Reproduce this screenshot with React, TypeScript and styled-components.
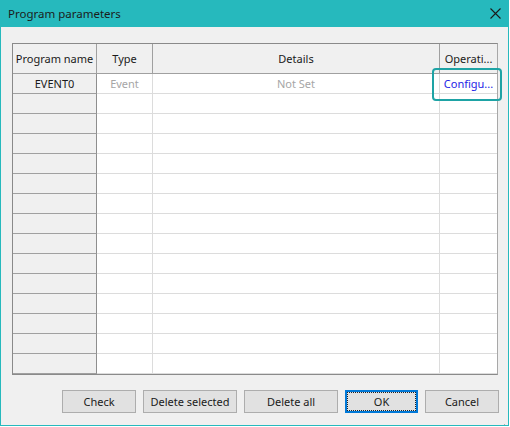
import React from "react";
import styled, { createGlobalStyle } from "styled-components";

const Global = createGlobalStyle`
  html, body { margin: 0; padding: 0; background: #ffffff; }
  body { font-family: "Noto Sans", "Liberation Sans", sans-serif; }
`;

const Window = styled.div`
  width: 509px;
  height: 426px;
  box-sizing: border-box;
  border: 1px solid #26b9bd;
  border-top: none;
  background: #f0f0f0;
  display: flex;
  flex-direction: column;
  position: relative;
`;

const TitleBar = styled.div`
  height: 27px;
  background: #26b9bd;
  display: flex;
  align-items: center;
  justify-content: space-between;
  padding: 0 8px 0 8px;
  margin: 0 -1px;
  color: #1b1b1b;
  font-size: 11.5px;
  font-family: "Noto Sans", "Liberation Sans", sans-serif;
`;

const CloseBtn = styled.div`
  width: 12px;
  height: 12px;
  display: flex;
  align-items: center;
  justify-content: center;
`;

const Body = styled.div`
  flex: 1;
  display: flex;
  flex-direction: column;
  padding: 16px 0 0 11px;
`;

const Frame = styled.div`
  position: relative;
  width: 486px;
  box-sizing: border-box;
  border: 1px solid #8a8a8a;
  border-right-color: #a8a8a8;
  background: #ffffff;
`;

const Grid = styled.div`
  display: grid;
  grid-template-columns: 84px 56px 287px 57px;
  grid-auto-rows: 20px;
  grid-template-rows: 30px;
  font-family: "Noto Sans", "Liberation Sans", sans-serif;
  font-size: 11px;
`;

const HeadCell = styled.div<{ $last?: boolean }>`
  background: #f0f0f0;
  border-right: ${(p) => (p.$last ? "none" : "1px solid #a0a0a0")};
  border-bottom: 1px solid #a0a0a0;
  display: flex;
  align-items: center;
  justify-content: center;
  color: #1a1a1a;
  white-space: nowrap;
  overflow: hidden;
  padding-bottom: 1px;
  box-sizing: border-box;
`;

const RowHead = styled.div`
  background: #f0f0f0;
  border-right: 1px solid #8e8e8e;
  border-bottom: 1px solid #a0a0a0;
  box-sizing: border-box;
  display: flex;
  align-items: center;
  justify-content: center;
  color: #1a1a1a;
`;

const Cell = styled.div<{ $tone?: "muted" | "link"; $last?: boolean }>`
  background: #ffffff;
  border-right: ${(p) => (p.$last ? "none" : "1px solid #dcdcdc")};
  border-bottom: 1px solid #dcdcdc;
  box-sizing: border-box;
  display: flex;
  align-items: center;
  justify-content: center;
  white-space: nowrap;
  color: ${(p) =>
    p.$tone === "muted" ? "#a6a6a6" : p.$tone === "link" ? "#2323e6" : "#1a1a1a"};
`;

const Highlight = styled.div`
  position: absolute;
  left: 419px;
  top: 24px;
  width: 70px;
  height: 33px;
  box-sizing: border-box;
  border: 2px solid #1ea3a5;
  border-radius: 4px;
  pointer-events: none;
`;

const ButtonRow = styled.div`
  display: flex;
  justify-content: flex-end;
  gap: 7px;
  padding: 15px 9px 0 0;
`;

const Button = styled.button<{ $w: number; $primary?: boolean }>`
  width: ${(p) => p.$w}px;
  height: 23px;
  box-sizing: border-box;
  background: #e1e1e1;
  border: 1px solid ${(p) => (p.$primary ? "#0078d7" : "#adadad")};
  outline: ${(p) => (p.$primary ? "1px dotted #222" : "none")};
  outline-offset: -3px;
  box-shadow: ${(p) => (p.$primary ? "inset 0 0 0 1px #0078d7" : "none")};
  font-family: "Noto Sans", "Liberation Sans", sans-serif;
  font-size: 11px;
  color: #1a1a1a;
  padding: 0;
`;

const Grip = styled.div`
  position: absolute;
  right: 2px;
  bottom: 2px;
  width: 8px;
  height: 8px;
`;

const ROWS = 15;

export default function App() {
  const rows = Array.from({ length: ROWS }, (_, i) => i);
  return (
    <>
      <Global />
      <Window>
        <TitleBar>
          <span>Program parameters</span>
          <CloseBtn>
            <svg width="11" height="11" viewBox="0 0 11 11">
              <path d="M0.5 0.5 L10.5 10.5 M10.5 0.5 L0.5 10.5" stroke="#1b1b1b" strokeWidth="1.1" />
            </svg>
          </CloseBtn>
        </TitleBar>
        <Body>
          <Frame>
            <Grid>
              <HeadCell>Program name</HeadCell>
              <HeadCell>Type</HeadCell>
              <HeadCell>Details</HeadCell>
              <HeadCell $last>Operati...</HeadCell>
              {rows.map((i) => (
                <React.Fragment key={i}>
                  <RowHead>{i === 0 ? "EVENT0" : ""}</RowHead>
                  <Cell $tone="muted">{i === 0 ? "Event" : ""}</Cell>
                  <Cell $tone="muted">{i === 0 ? "Not Set" : ""}</Cell>
                  <Cell $tone="link" $last>{i === 0 ? "Configu..." : ""}</Cell>
                </React.Fragment>
              ))}
            </Grid>
            <Highlight />
          </Frame>
          <ButtonRow>
            <Button $w={74}>Check</Button>
            <Button $w={94}>Delete selected</Button>
            <Button $w={94}>Delete all</Button>
            <Button $w={73} $primary>OK</Button>
            <Button $w={74}>Cancel</Button>
          </ButtonRow>
        </Body>
        <Grip>
          <svg width="8" height="8" viewBox="0 0 8 8">
            <rect x="6" y="0" width="1" height="1" fill="#b0b0b0" />
            <rect x="3" y="3" width="1" height="1" fill="#b0b0b0" />
            <rect x="6" y="3" width="1" height="1" fill="#b0b0b0" />
            <rect x="0" y="6" width="1" height="1" fill="#b0b0b0" />
            <rect x="3" y="6" width="1" height="1" fill="#b0b0b0" />
            <rect x="6" y="6" width="1" height="1" fill="#b0b0b0" />
          </svg>
        </Grip>
      </Window>
    </>
  );
}
